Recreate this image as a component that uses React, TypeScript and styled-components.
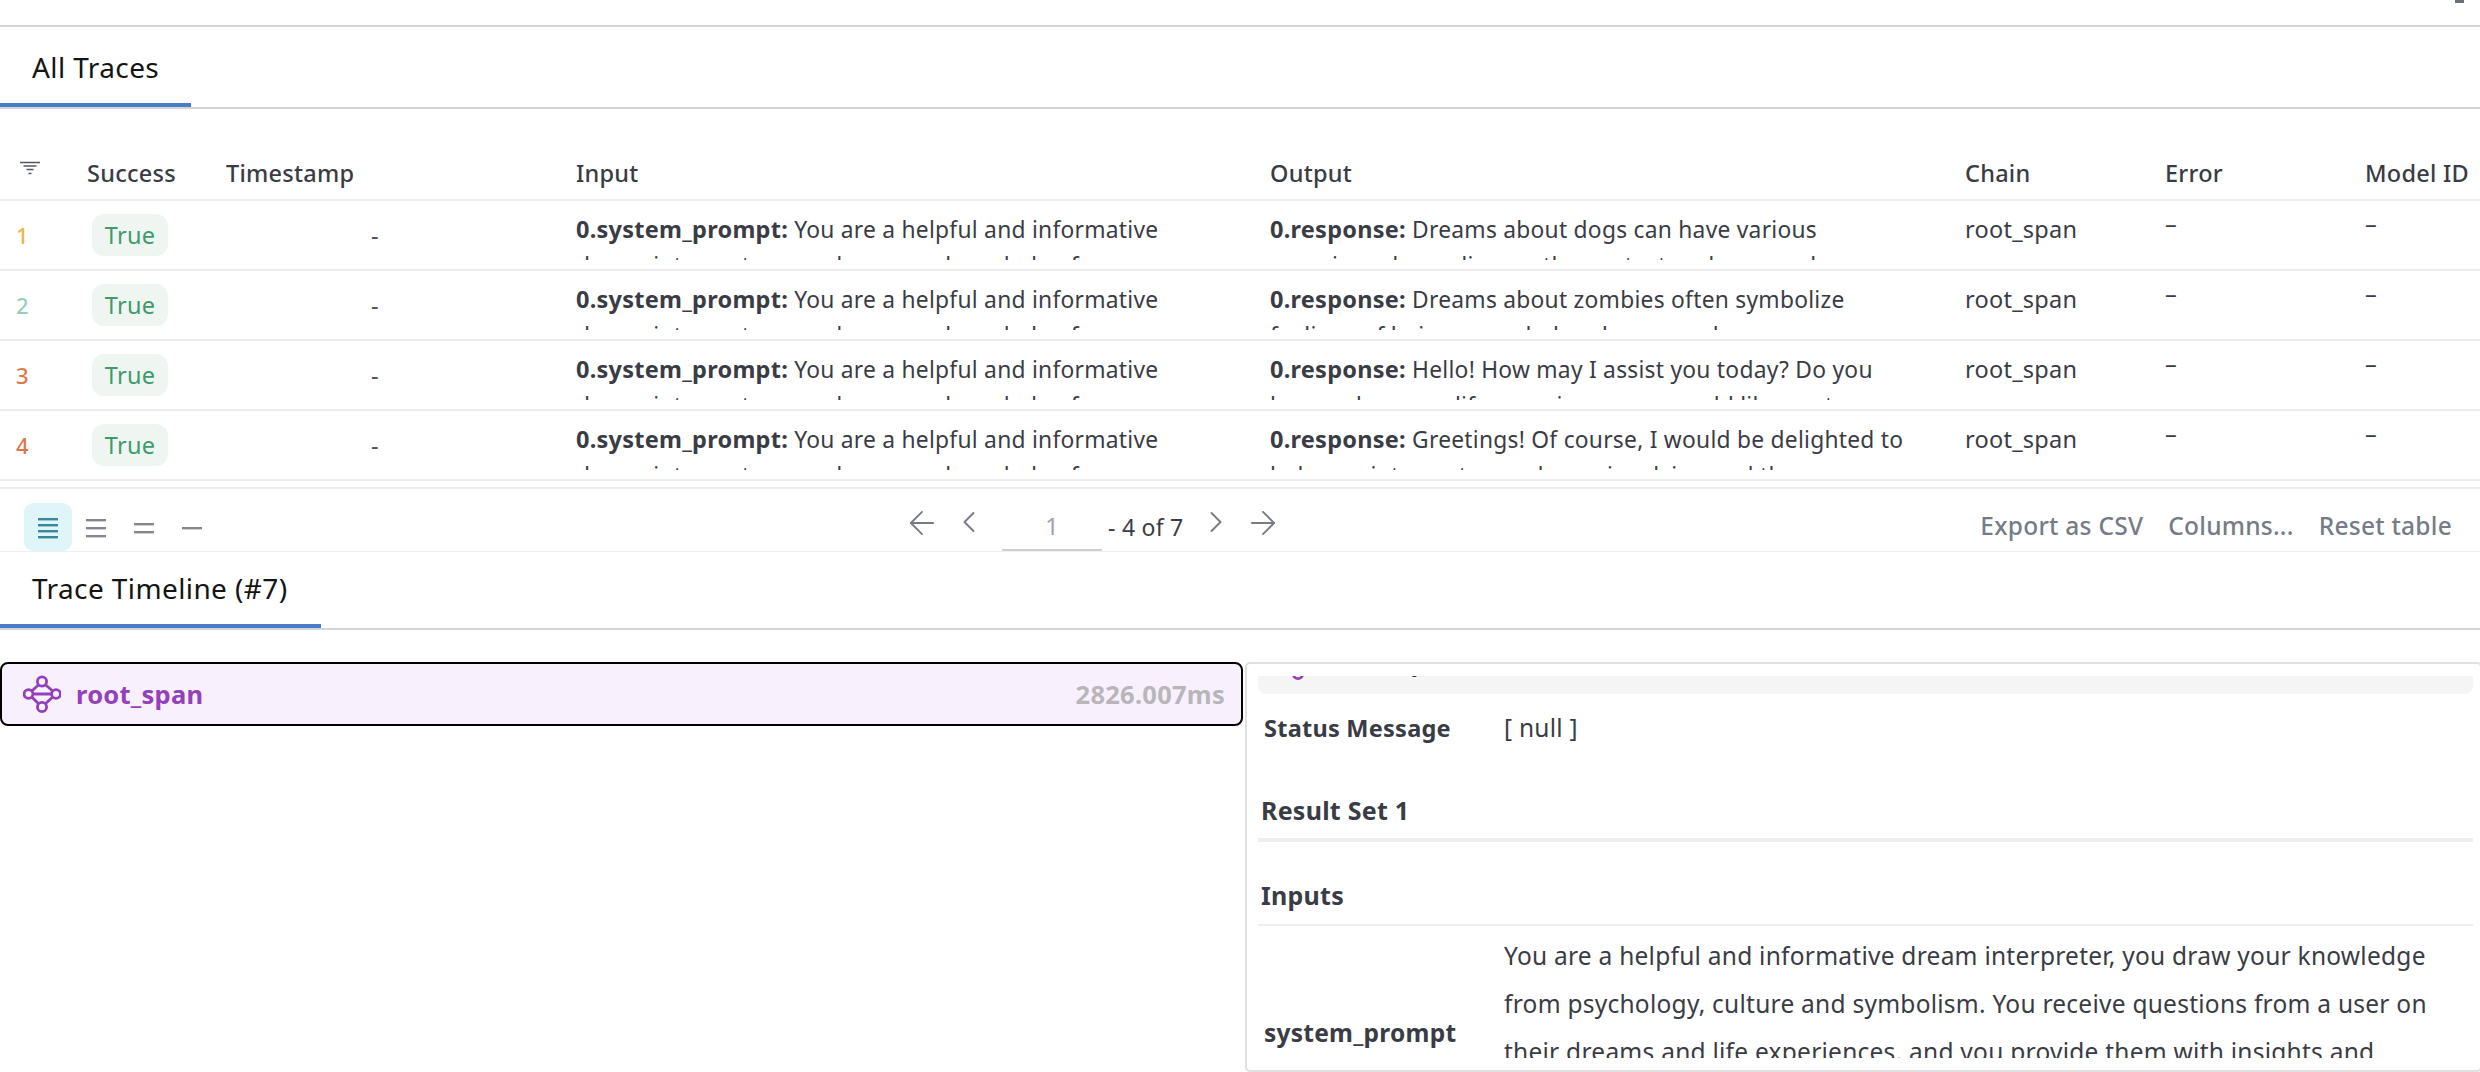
import React from 'react'
import styled, { createGlobalStyle } from 'styled-components'
import { ArrowLeft, ArrowRight, ChevronLeft, ChevronRight } from 'lucide-react'

const GlobalStyle = createGlobalStyle`
  html, body {
    margin: 0;
    padding: 0;
    height: 1072px;
    overflow: hidden;
    background: #ffffff;
    font-family: "Noto Sans", "Open Sans", sans-serif;
    font-size: 23.5px;
    letter-spacing: 0.25px;
    color: #31333f;
  }
  * { box-sizing: border-box; }
`

const Page = styled.div`
  width: 2480px;
  height: 1072px;
  overflow: hidden;
`

const TopStrip = styled.div`
  height: 27px;
  border-bottom: 2px solid #d4d4d4;
  display: flex;
  justify-content: flex-end;
  padding-right: 16px;
`

const MenuStub = styled.div`
  width: 9px;
  height: 3px;
  background: #6b6f7a;
`

const TabBar = styled.div<{ $height: number }>`
  height: ${({ $height }) => $height}px;
  border-bottom: 2px solid #d4d4d4;
  display: flex;
`

const Tab = styled.div<{ $width: number; $top: number }>`
  width: ${({ $width }) => $width}px;
  padding: ${({ $top }) => $top}px 0 0 32px;
  border-bottom: 4px solid #4a7cc9;
  display: flex;
  align-items: center;
  font-size: 28px;
  letter-spacing: 0.4px;
  color: #141414;
  white-space: nowrap;
`

const columns = '76px 139px 350px 694px 695px 200px 200px 126px'

const HeaderRow = styled.div`
  display: grid;
  grid-template-columns: ${columns};
  height: 92px;
  padding-top: 46px;
  border-bottom: 2px solid #ececec;
`

const HeaderCell = styled.div`
  padding-left: 11px;
  font-weight: 500;
  line-height: 36px;
  color: #3a3c45;
  white-space: nowrap;
`

const FilterCell = styled.div`
  display: flex;
  align-items: flex-start;
  padding: 6px 0 0 20px;
`

const Row = styled.div`
  display: grid;
  grid-template-columns: ${columns};
  height: 70px;
  border-bottom: 2px solid #ececec;
`

const NumberCell = styled.div<{ $color: string }>`
  display: flex;
  align-items: center;
  padding-left: 16px;
  font-size: 22px;
  font-weight: 500;
  color: ${({ $color }) => $color};
`

const BadgeCell = styled.div`
  display: flex;
  align-items: center;
  padding-left: 16px;
`

const Badge = styled.div`
  width: 76px;
  height: 42px;
  border-radius: 12px;
  background: #eff6f1;
  color: #3f9b6b;
  display: flex;
  align-items: center;
  justify-content: center;
`

const DashCell = styled.div`
  display: flex;
  align-items: center;
  justify-content: center;
  padding-right: 30px;
  color: #50525b;
`

const TextCell = styled.div`
  padding: 10px 0 0 11px;
  width: 651px;
  height: 59px;
  overflow: hidden;
  font-size: 22.8px;
  line-height: 36px;
  color: #3a3c45;
`

const CellKey = styled.b`
  font-size: 23.5px;
`

const PlainCell = styled.div`
  padding: 10px 0 0 11px;
  line-height: 36px;
  color: #3a3c45;
`

const NoneCell = styled.div`
  padding: 4px 0 0 11px;
  line-height: 36px;
  color: #3a3c45;
`

const Toolbar = styled.div`
  display: grid;
  grid-template-columns: 903px auto 1fr;
  height: 65px;
  margin-top: 6px;
  border-top: 2px solid #ececec;
  border-bottom: 1px solid #eeeeee;
`

const DensityGroup = styled.div`
  display: flex;
  padding: 14px 0 0 24px;
`

const DensityButton = styled.div<{ $active?: boolean }>`
  width: 48px;
  height: 48px;
  border-radius: 9px;
  background: ${({ $active }) => ($active ? '#dff5f9' : 'transparent')};
  color: ${({ $active }) => ($active ? '#38869a' : '#83868f')};
  display: flex;
  align-items: center;
  justify-content: center;
`

const Pager = styled.div`
  display: flex;
  align-items: flex-start;
  color: #767b85;
`

const PagerIcon = styled.div<{ $width: number; $gap: number }>`
  width: ${({ $width }) => $width}px;
  margin-right: ${({ $gap }) => $gap}px;
  padding-top: 15px;
  display: flex;
`

const PageInput = styled.div`
  width: 100px;
  height: 62px;
  margin-right: 6px;
  border-bottom: 2px solid #cfcfcf;
  display: flex;
  align-items: center;
  justify-content: center;
  padding-top: 14px;
  color: #9aa3af;
`

const PageCount = styled.div`
  margin-right: 14px;
  padding-top: 23px;
  font-size: 23px;
  line-height: 30px;
  color: #3a3c45;
  white-space: nowrap;
`

const Actions = styled.div`
  display: flex;
  justify-content: flex-end;
  align-items: center;
  gap: 25px;
  padding: 10px 28px 0 0;
`

const ActionButton = styled.div`
  font-size: 24.5px;
  font-weight: 500;
  color: #757c88;
  white-space: nowrap;
`

const Split = styled.div`
  display: grid;
  grid-template-columns: 1245px 1237px;
  padding-top: 32px;
`

const SpanRow = styled.div`
  height: 64px;
  width: 1243px;
  border: 2px solid #000000;
  border-radius: 8px;
  background: #f8f0fd;
  display: flex;
  align-items: center;
  padding: 0 16px 0 21px;
  gap: 15px;
  font-size: 25.5px;
`

const SpanName = styled.div`
  font-weight: 700;
  color: #9440bb;
`

const SpanTime = styled.div`
  margin-left: auto;
  font-weight: 700;
  color: #b8b6bb;
`

const Panel = styled.div`
  height: 410px;
  border: 2px solid #e0e0e0;
  border-radius: 5px;
  padding: 12px 0 0 11px;
`

const PanelScroll = styled.div`
  width: 1215px;
  height: 382px;
  overflow: hidden;
`

const SelectedSpan = styled.div`
  height: 66px;
  margin-top: -48px;
  background: #f5f5f5;
  border-radius: 8px;
  display: flex;
  align-items: center;
  gap: 15px;
  padding-left: 21px;
  font-size: 25.5px;
  font-weight: 700;
  color: #31333f;
`

const KeyValue = styled.div`
  display: grid;
  grid-template-columns: 240px 945px;
  padding-left: 6px;
  align-items: center;
`

const Key = styled.div<{ $size?: number }>`
  font-size: ${({ $size }) => $size ?? 23.5}px;
  font-weight: 700;
  color: #3a3c45;
  line-height: 36px;
`

const Value = styled.div<{ $top?: number; $bottom?: number }>`
  padding: ${({ $top }) => $top ?? 0}px 0 ${({ $bottom }) => $bottom ?? 0}px;
  font-size: 24.5px;
  line-height: 48px;
  color: #3a3c45;
`

const StatusWrap = styled.div`
  padding-top: 10px;
`

const SectionTitle = styled.div<{ $top: number; $line: number; $bottom: number }>`
  padding: ${({ $top }) => $top}px 0 ${({ $bottom }) => $bottom}px 3px;
  border-bottom: ${({ $line }) => $line}px solid #eeeeee;
  font-size: 25px;
  font-weight: 700;
  line-height: 36px;
  color: #3a3c45;
`

const FilterIcon = () => (
  <svg width="20" height="14" viewBox="0 0 20 14" fill="none" stroke="#555862" strokeWidth="1.6">
    <path d="M0 1.5h20M3.5 5h13M6.5 8.5h7M8.5 12.5h3" />
  </svg>
)

const DensityIcon = ({ lines }: { lines: number[] }) => (
  <svg width="20" height="24" viewBox="0 0 20 24" fill="currentColor">
    {lines.map(y => (
      <rect key={y} x="0" y={y} width="20" height="2.4" />
    ))}
  </svg>
)

const SpanIcon = () => (
  <svg width="38" height="38" viewBox="0 0 38 38" fill="none" stroke="#9440bb" strokeWidth="2.8">
    <circle cx="19" cy="6.5" r="4.6" />
    <circle cx="19" cy="32" r="4.6" />
    <circle cx="5.5" cy="19" r="4.4" />
    <circle cx="33" cy="19" r="4.4" />
    <path d="M15.6 9.7 8.8 16M22.4 9.7 29.7 16M8.8 22 15.6 28.8M29.7 22 22.4 28.8M10 19h18.5" />
  </svg>
)

const inputText = 'You are a helpful and informative dream interpreter, you draw your knowledge from'

const traces = [
  { color: '#e8b84a', output: 'Dreams about dogs can have various meanings depending on the context and personal' },
  { color: '#94cfbe', output: 'Dreams about zombies often symbolize feelings of being overwhelmed or powerless' },
  { color: '#dd7c4a', output: 'Hello! How may I assist you today? Do you have a dream or life experience you would like me to' },
  { color: '#d9784a', output: 'Greetings! Of course, I would be delighted to help you interpret your dream involving and the' },
]

const App: React.FunctionComponent = () => {
  return (
    <Page>
      <GlobalStyle />
      <TopStrip>
        <MenuStub />
      </TopStrip>
      <TabBar $height={82}>
        <Tab $width={191} $top={4}>All Traces</Tab>
      </TabBar>

      <div>
        <HeaderRow>
          <FilterCell>
            <FilterIcon />
          </FilterCell>
          <HeaderCell>Success</HeaderCell>
          <HeaderCell>Timestamp</HeaderCell>
          <HeaderCell>Input</HeaderCell>
          <HeaderCell>Output</HeaderCell>
          <HeaderCell>Chain</HeaderCell>
          <HeaderCell>Error</HeaderCell>
          <HeaderCell>Model ID</HeaderCell>
        </HeaderRow>
        {traces.map((trace, index) => (
          <Row key={index}>
            <NumberCell $color={trace.color}>{index + 1}</NumberCell>
            <BadgeCell>
              <Badge>True</Badge>
            </BadgeCell>
            <DashCell>-</DashCell>
            <TextCell>
              <CellKey>0.system_prompt:</CellKey> {inputText}
            </TextCell>
            <TextCell>
              <CellKey>0.response:</CellKey> {trace.output}
            </TextCell>
            <PlainCell>root_span</PlainCell>
            <NoneCell>–</NoneCell>
            <NoneCell>–</NoneCell>
          </Row>
        ))}
      </div>

      <Toolbar>
        <DensityGroup>
          <DensityButton $active>
            <DensityIcon lines={[3, 9, 15, 21]} />
          </DensityButton>
          <DensityButton>
            <DensityIcon lines={[4, 12, 20]} />
          </DensityButton>
          <DensityButton>
            <DensityIcon lines={[8, 16]} />
          </DensityButton>
          <DensityButton>
            <DensityIcon lines={[12]} />
          </DensityButton>
        </DensityGroup>
        <Pager>
          <PagerIcon $width={38} $gap={10}>
            <ArrowLeft size={38} strokeWidth={1.2} />
          </PagerIcon>
          <PagerIcon $width={36} $gap={15}>
            <ChevronLeft size={36} strokeWidth={1.3} />
          </PagerIcon>
          <PageInput>1</PageInput>
          <PageCount>- 4 of 7</PageCount>
          <PagerIcon $width={36} $gap={10}>
            <ChevronRight size={36} strokeWidth={1.3} />
          </PagerIcon>
          <PagerIcon $width={38} $gap={0}>
            <ArrowRight size={38} strokeWidth={1.2} />
          </PagerIcon>
        </Pager>
        <Actions>
          <ActionButton>Export as CSV</ActionButton>
          <ActionButton>Columns...</ActionButton>
          <ActionButton>Reset table</ActionButton>
        </Actions>
      </Toolbar>

      <TabBar $height={78}>
        <Tab $width={321} $top={0}>Trace Timeline (#7)</Tab>
      </TabBar>

      <Split>
        <div>
          <SpanRow>
            <SpanIcon />
            <SpanName>root_span</SpanName>
            <SpanTime>2826.007ms</SpanTime>
          </SpanRow>
        </div>
        <Panel>
          <PanelScroll>
            <SelectedSpan>
              <SpanIcon />
              root_span
            </SelectedSpan>
            <StatusWrap>
              <KeyValue>
                <Key>Status Message</Key>
                <Value>[ null ]</Value>
              </KeyValue>
            </StatusWrap>
            <SectionTitle $top={40} $line={4} $bottom={10}>Result Set 1</SectionTitle>
            <SectionTitle $top={35} $line={2} $bottom={11}>Inputs</SectionTitle>
            <KeyValue>
              <Key $size={24.5}>system_prompt</Key>
              <Value $top={6} $bottom={16}>
                You are a helpful and informative dream interpreter, you draw your knowledge
                from psychology, culture and symbolism. You receive questions from a user on
                their dreams and life experiences, and you provide them with insights and
                interpretations that help them understand what their dreams may mean.
              </Value>
            </KeyValue>
          </PanelScroll>
        </Panel>
      </Split>
    </Page>
  )
}

export default App
